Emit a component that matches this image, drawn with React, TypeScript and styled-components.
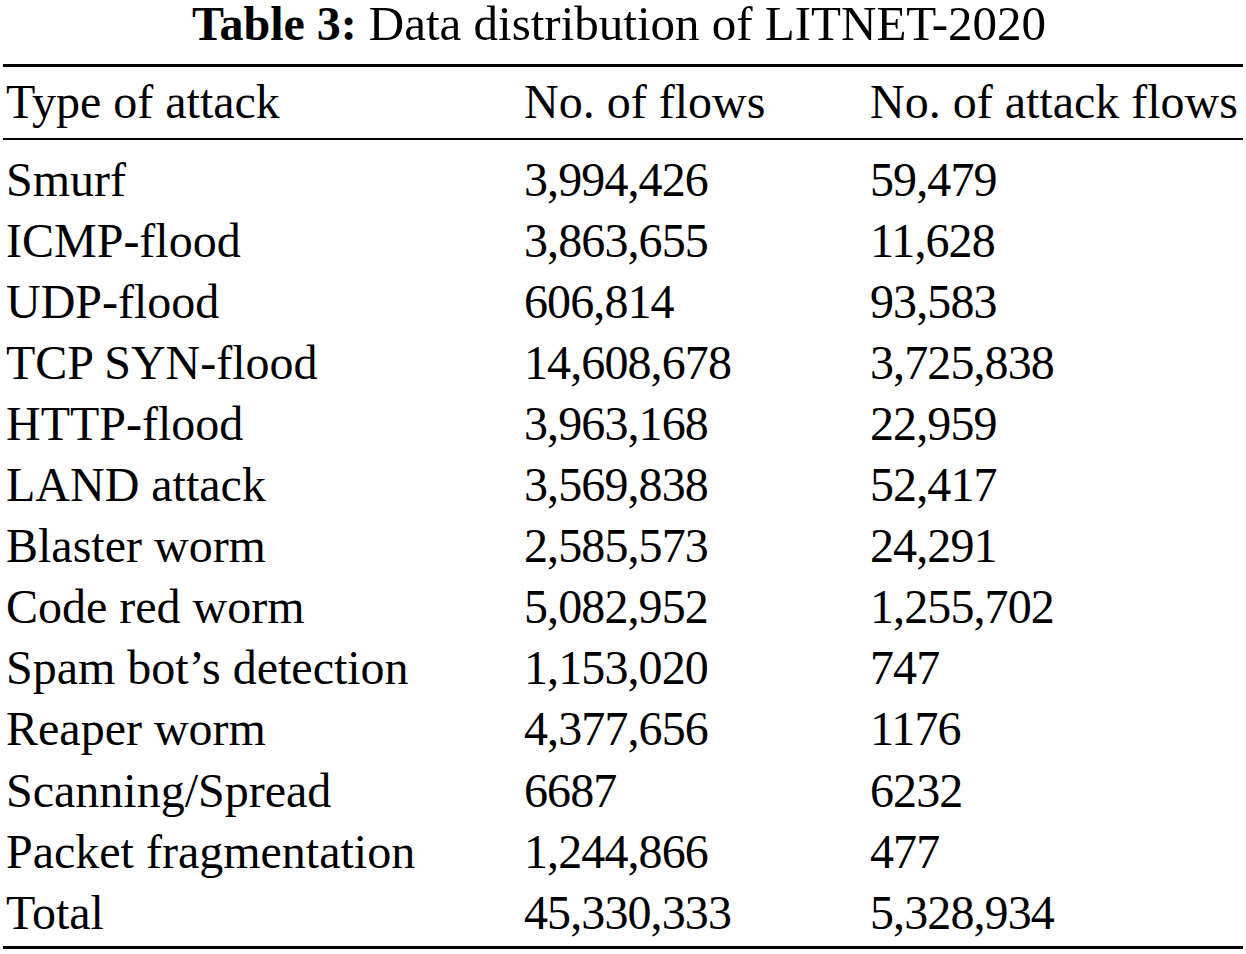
import React from "react";
import styled, { createGlobalStyle } from "styled-components";

const Global = createGlobalStyle`
  html, body { margin: 0; padding: 0; background: #ffffff; }
  body { font-family: "Liberation Serif", "Times New Roman", serif; color: #000; }
`;

const Page = styled.div`
  width: 1246px;
  padding: 0 3px 0 3px;
  box-sizing: border-box;
`;

const Caption = styled.div`
  font-size: 49px;
  line-height: 48px;
  text-align: center;
  padding-right: 8px;
  margin-bottom: 16px;
  white-space: nowrap;
`;

const CaptionLabel = styled.span`
  font-size: 48px;
  font-weight: bold;
  margin-right: 12px;
`;

const Rule = styled.div<{ $w: number }>`
  height: ${(p) => p.$w}px;
  background: #000;
`;

const Grid = styled.div<{ $pt: number; $pb: number }>`
  display: grid;
  grid-template-columns: 518px 346px 1fr;
  padding: ${(p) => p.$pt}px 0 ${(p) => p.$pb}px 3px;
  font-size: 48px;
  line-height: 61.05px;
  white-space: nowrap;
`;

const Cell = styled.div<{ $num?: boolean }>`
  letter-spacing: ${(p) => (p.$num ? "-0.9px" : "0")};
`;

const rows: [string, string, string][] = [
  ["Smurf", "3,994,426", "59,479"],
  ["ICMP-flood", "3,863,655", "11,628"],
  ["UDP-flood", "606,814", "93,583"],
  ["TCP SYN-flood", "14,608,678", "3,725,838"],
  ["HTTP-flood", "3,963,168", "22,959"],
  ["LAND attack", "3,569,838", "52,417"],
  ["Blaster worm", "2,585,573", "24,291"],
  ["Code red worm", "5,082,952", "1,255,702"],
  ["Spam bot\u2019s detection", "1,153,020", "747"],
  ["Reaper worm", "4,377,656", "1176"],
  ["Scanning/Spread", "6687", "6232"],
  ["Packet fragmentation", "1,244,866", "477"],
  ["Total", "45,330,333", "5,328,934"],
];

export default function App() {
  return (
    <>
      <Global />
      <Page>
        <Caption>
          <CaptionLabel>Table 3:</CaptionLabel>Data distribution of LITNET-2020
        </Caption>
        <Rule $w={3} />
        <Grid $pt={4} $pb={6}>
          <Cell>Type of attack</Cell>
          <Cell>No. of flows</Cell>
          <Cell>No. of attack flows</Cell>
        </Grid>
        <Rule $w={2} />
        <Grid $pt={9} $pb={3}>
          {rows.map((r) => (
            <React.Fragment key={r[0]}>
              <Cell>{r[0]}</Cell>
              <Cell $num>{r[1]}</Cell>
              <Cell $num>{r[2]}</Cell>
            </React.Fragment>
          ))}
        </Grid>
        <Rule $w={3} />
      </Page>
    </>
  );
}
